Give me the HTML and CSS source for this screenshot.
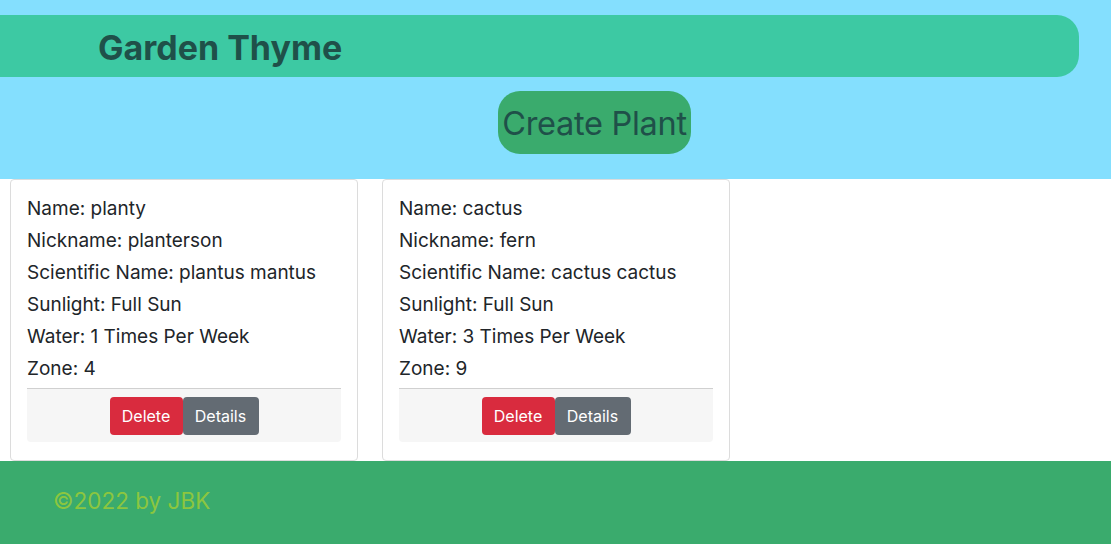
FILE: index.html
```html
<!DOCTYPE html>
<html>
<head>
<meta charset="utf-8">
<link rel="stylesheet" href="styles.css">
</head>
<body>
<header class="top">
  <nav class="nav"><h1 class="brand">Garden Thyme</h1></nav>
  <div class="create-row"><button class="create">Create Plant</button></div>
</header>
<main class="cards">
  <div class="card">
    <div class="card-body">
      <p>Name: planty</p>
      <p>Nickname: planterson</p>
      <p>Scientific Name: plantus mantus</p>
      <p>Sunlight: Full Sun</p>
      <p>Water: 1 Times Per Week</p>
      <p>Zone: 4</p>
    </div>
    <div class="card-foot">
      <button class="btn btn-del">Delete</button><button class="btn btn-det">Details</button>
    </div>
  </div>
  <div class="card">
    <div class="card-body">
      <p>Name: cactus</p>
      <p>Nickname: fern</p>
      <p>Scientific Name: cactus cactus</p>
      <p>Sunlight: Full Sun</p>
      <p>Water: 3 Times Per Week</p>
      <p>Zone: 9</p>
    </div>
    <div class="card-foot">
      <button class="btn btn-del">Delete</button><button class="btn btn-det">Details</button>
    </div>
  </div>
</main>
<footer class="foot"><span class="copy">©2022 by JBK</span></footer>
</body>
</html>
```
FILE: styles.css
```css
* { box-sizing: border-box; }
html, body { margin: 0; padding: 0; }
body {
  font-family: Inter, "Noto Sans", sans-serif;
  color: #212529;
  background: #fff;
}
.top {
  background: #84dffe;
  padding-top: 15px;
  height: 179px;
}
.nav {
  background: #3dc9a3;
  height: 62px;
  margin-right: 32px;
  border-radius: 0 22px 22px 0;
  display: flex;
  align-items: center;
  padding-left: 98px;
  padding-top: 2px;
}
.brand {
  margin: 0;
  font-size: 34px;
  font-weight: 700;
  color: #1f5049;
}
.create-row {
  display: flex;
  padding-left: 498px;
  padding-top: 14px;
}
.create {
  font-family: Inter, "Noto Sans", sans-serif;
  background: #3aab6d;
  color: #1f5049;
  border: none;
  border-radius: 22px;
  height: 63px;
  width: 193px;
  font-size: 32.5px;
  padding: 2px 0 0;
  letter-spacing: -0.3px;
}
.cards {
  display: flex;
  gap: 24px;
  padding-left: 10px;
  align-items: flex-start;
}
.card {
  width: 348px;
  border: 1px solid #dcdcdc;
  border-radius: 4px;
  padding: 13px 16px 18px;
}
.card-body p {
  margin: 0;
  font-size: 19px;
  line-height: 32px;
}
.card-body { margin-bottom: 3px; }
.card-foot {
  background: #f6f6f6;
  border-top: 1px solid #d0d0d0;
  border-radius: 0 0 4px 4px;
  padding: 8px 0 7px;
  display: flex;
  justify-content: center;
}
.btn {
  font-family: Inter, "Noto Sans", sans-serif;
  font-size: 16px;
  line-height: 24px;
  padding: 7px 12px;
  border: none;
  border-radius: 4px;
  color: #fff;
  height: 38px;
}
.btn-del { background: #d92b3e; width: 73px; }
.btn-det { background: #636b73; width: 76px; }
.foot {
  background: #3aab6d;
  height: 83px;
  display: flex;
  align-items: center;
  padding-left: 53px;
  padding-bottom: 4px;
}
.copy {
  color: #8cc63f;
  font-size: 22.5px;
}
```
